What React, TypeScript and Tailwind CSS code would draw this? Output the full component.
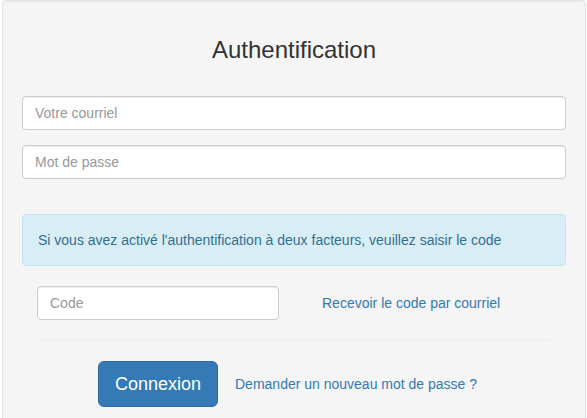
export default function App() {
  return (
    <div className="min-h-screen bg-white font-['Liberation_Sans',Arial,sans-serif] text-[14px] leading-[20px] text-[#333]">
      <div className="ml-[2px] min-h-[440px] w-[584px] rounded-[4px] border border-[#e3e3e3] bg-[#f5f5f5] px-[19px] pt-[36px] shadow-[inset_0_1px_1px_rgba(0,0,0,0.05)]">
        <h3 className="mb-[33px] text-center text-[24px] leading-[26.4px] font-normal text-[#333]">
          Authentification
        </h3>

        <div className="mb-[15px]">
          <input
            type="email"
            placeholder="Votre courriel"
            className="block h-[34px] w-full rounded-[4px] border border-[#ccc] bg-white px-3 text-[14px] text-[#555] shadow-[inset_0_1px_1px_rgba(0,0,0,0.075)] outline-none placeholder:text-[#999]"
          />
        </div>
        <div className="mb-[35px]">
          <input
            type="password"
            placeholder="Mot de passe"
            className="block h-[34px] w-full rounded-[4px] border border-[#ccc] bg-white px-3 text-[14px] text-[#555] shadow-[inset_0_1px_1px_rgba(0,0,0,0.075)] outline-none placeholder:text-[#999]"
          />
        </div>

        <div className="mb-[20px] rounded-[4px] border border-[#bce8f1] bg-[#d9edf7] p-[15px] text-[#31708f]">
          Si vous avez activé l'authentification à deux facteurs, veuillez saisir le code
        </div>

        <div className="flex">
          <div className="w-1/2 px-[15px]">
            <input
              type="text"
              placeholder="Code"
              className="block h-[34px] w-full rounded-[4px] border border-[#ccc] bg-white px-3 text-[14px] text-[#555] shadow-[inset_0_1px_1px_rgba(0,0,0,0.075)] outline-none placeholder:text-[#999]"
            />
          </div>
          <div className="w-1/2 px-[15px]">
            <a
              href="#"
              className="inline-block border border-transparent px-[12px] py-[6px] text-[#337ab7]"
            >
              Recevoir le code par courriel
            </a>
          </div>
        </div>

        <div className="px-[15px]">
          <hr className="my-[20px] border-0 border-t border-[#eee]" />
          <div className="flex items-center justify-center">
            <button
              type="button"
              className="h-[46px] rounded-[6px] border border-[#2e6da4] bg-[#337ab7] px-[16px] text-[18px] leading-[24px] text-white"
            >
              Connexion
            </button>
            <a
              href="#"
              className="ml-[4px] inline-block border border-transparent px-[12px] py-[6px] text-[#337ab7]"
            >
              Demander un nouveau mot de passe ?
            </a>
          </div>
        </div>
      </div>
    </div>
  );
}
